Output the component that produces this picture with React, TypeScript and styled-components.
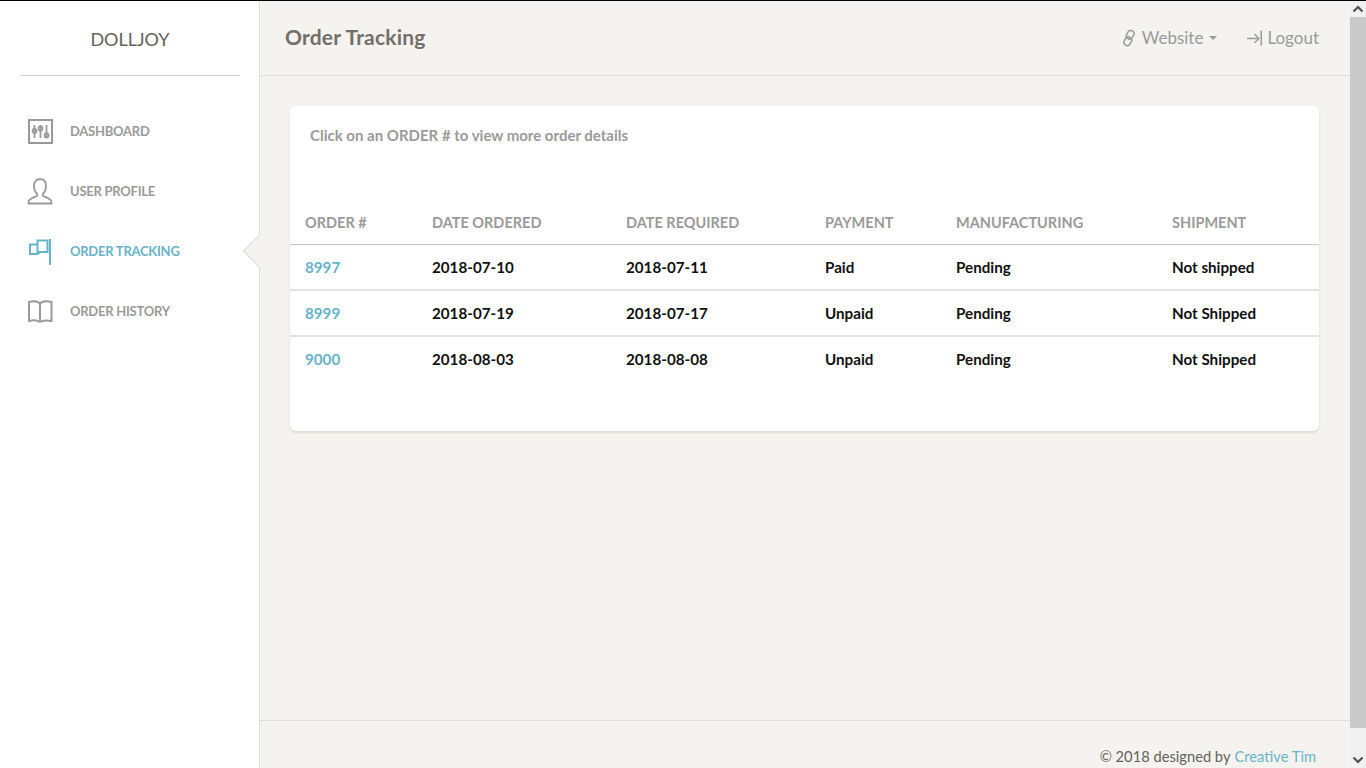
import React from "react";
import styled, { createGlobalStyle, css } from "styled-components";

const GlobalStyle = createGlobalStyle`
  html, body {
    margin: 0;
    padding: 0;
    height: 100%;
    overflow: hidden;
  }
  body {
    font-family: Lato, "Open Sans", sans-serif;
    background: #000;
    color: #66615b;
  }
`;

const Frame = styled.div`
  height: 767px;
  margin-top: 1px;
  display: flex;
  overflow: hidden;
  background: #f4f3ef;
`;

const Layout = styled.div`
  flex: 1;
  min-width: 0;
  display: flex;
  height: 793px;
`;

// the page's scrollbar, it is part of the picture
const ScrollBar = styled.div`
  width: 16px;
  flex: none;
  display: flex;
  flex-direction: column;
  background: #f1f1f1;
`;

const ScrollButton = styled.svg`
  width: 16px;
  height: 16px;
  flex: none;
  fill: none;
  stroke: #505050;
  stroke-width: 2.2;
`;

const ScrollThumb = styled.div`
  height: 711px;
  flex: none;
  background: #c9c9c9;
`;

const ScrollTrack = styled.div`
  flex: 1;
`;

const Sidebar = styled.aside`
  width: 259px;
  flex: none;
  background: #fff;
  border-right: 1px solid #ddd;
`;

const Brand = styled.div`
  margin: 0 19px 0 20px;
  height: 75px;
  box-sizing: border-box;
  padding-top: 1px;
  border-bottom: 1px solid #cfcfcf;
  display: flex;
  align-items: center;
  justify-content: center;
  font-size: 18px;
  color: #66615b;
`;

const NavList = styled.ul`
  list-style: none;
  margin: 25px 0 0;
  padding: 0;
`;

const NavItem = styled.li<{ $active?: boolean }>`
  position: relative;
  height: 60px;
  display: flex;
  align-items: center;
  padding-left: 27px;
  gap: 17px;
  font-size: 13px;
  font-weight: 700;
  letter-spacing: -0.25px;
  text-transform: uppercase;
  color: ${(p) => (p.$active ? "#68b3c8" : "#9a9a9a")};

  ${(p) =>
    p.$active &&
    css`
      &::after {
        content: "";
        position: absolute;
        right: 0;
        top: 50%;
        width: 23px;
        height: 23px;
        background: #f4f3ef;
        border-left: 1px solid #ddd;
        border-bottom: 1px solid #ddd;
        box-sizing: border-box;
        transform: translate(50%, -50%) rotate(45deg);
      }
    `}
`;

const NavIcon = styled.svg`
  width: 26px;
  height: 28px;
  flex: none;
  fill: none;
  stroke: currentColor;
`;

const Main = styled.div`
  flex: 1;
  min-width: 0;
  display: flex;
  flex-direction: column;
  position: relative;
  z-index: 1;
`;

const TopBar = styled.header`
  height: 75px;
  box-sizing: border-box;
  flex: none;
  border-bottom: 1px solid #ddd;
  display: flex;
  align-items: center;
  justify-content: space-between;
  padding: 0 31px 2px 25px;
`;

const PageTitle = styled.h1`
  margin: 0 0 2px;
  font-size: 21px;
  font-weight: 700;
  letter-spacing: 0.2px;
  color: #66615b;
  opacity: 0.9;
`;

const TopLinks = styled.nav`
  display: flex;
  align-items: center;
  gap: 29px;
  margin-top: 1px;
  font-size: 17px;
  color: #9a9a9a;
`;

const TopLink = styled.span<{ $gap: number }>`
  display: flex;
  align-items: center;
  gap: ${(p) => p.$gap}px;
`;

const Caret = styled.i`
  display: inline-block;
  border-top: 4px solid #9a9a9a;
  border-left: 4px solid transparent;
  border-right: 4px solid transparent;
`;

const TopIcon = styled.svg`
  height: 18px;
  fill: none;
  stroke: currentColor;
`;

const Content = styled.main`
  flex: 1;
  padding: 30px 31px 0 30px;
`;

const Card = styled.section`
  height: 325px;
  background: #fff;
  border-radius: 6px;
  box-shadow: 0 2px 2px rgba(204, 197, 185, 0.5);
  box-sizing: border-box;
  padding-top: 20px;
`;

const Hint = styled.p`
  margin: 0 0 0 20px;
  font-size: 15px;
  line-height: 18px;
  font-weight: 700;
  color: #9a9a9a;
`;

const OrdersTable = styled.table`
  width: 100%;
  margin-top: 59px;
  border-collapse: collapse;
  table-layout: fixed;
`;

const HeadCell = styled.th<{ $w: number }>`
  width: ${(p) => p.$w}px;
  height: 41px;
  padding: 0 0 1px 15px;
  box-sizing: border-box;
  text-align: left;
  font-size: 14.5px;
  font-weight: 700;
  color: #9a9a9a;
  text-transform: uppercase;
  border-bottom: 1px solid #ccc5b9;
`;

const Row = styled.tr`
  & + & td {
    border-top: 2px solid #e3e3e3;
  }
`;

const Cell = styled.td`
  height: 44px;
  padding: 0 0 0 15px;
  font-size: 15.2px;
  font-weight: 700;
  color: #111;
`;

const OrderLink = styled.a`
  color: #68b3c8;
  text-decoration: none;
`;

const Footer = styled.footer`
  flex: none;
  height: 74px;
  border-top: 1px solid #ddd;
  display: flex;
  justify-content: flex-end;
  padding: 26px 34px 0 0;
  box-sizing: border-box;
  font-size: 14.7px;
  color: #66615b;
`;

const FooterLink = styled.a`
  color: #68b3c8;
  margin-left: 4px;
`;

const orders = [
  { id: "8997", ordered: "2018-07-10", required: "2018-07-11", payment: "Paid", mfg: "Pending", ship: "Not shipped" },
  { id: "8999", ordered: "2018-07-19", required: "2018-07-17", payment: "Unpaid", mfg: "Pending", ship: "Not Shipped" },
  { id: "9000", ordered: "2018-08-03", required: "2018-08-08", payment: "Unpaid", mfg: "Pending", ship: "Not Shipped" },
];

const columns = [
  { label: "Order #", w: 127 },
  { label: "Date Ordered", w: 194 },
  { label: "Date Required", w: 199 },
  { label: "Payment", w: 131 },
  { label: "Manufacturing", w: 216 },
  { label: "Shipment", w: 162 },
];

function App() {
  return (
    <>
      <GlobalStyle />
      <Frame>
        <Layout>
          <Sidebar>
            <Brand>DOLLJOY</Brand>
            <NavList>
              <NavItem>
                <NavIcon viewBox="0 0 26 28">
                  <rect x="2" y="3" width="23" height="23" strokeWidth="2" />
                  <path d="M7.500 8v13M13.500 8v13M19.500 8v13" strokeWidth="1.800" />
                  <circle cx="7.500" cy="14" r="2" strokeWidth="1.800" />
                  <circle cx="13.500" cy="11.500" r="2" strokeWidth="1.800" />
                  <circle cx="19.500" cy="18.500" r="2" strokeWidth="1.800" />
                </NavIcon>
                Dashboard
              </NavItem>
              <NavItem>
                <NavIcon viewBox="0 0 26 28">
                  <path d="M1.500 26.500v-1.500c0-3.500 6-4.500 8.500-6v-2.500c-2-1.500-3-4-3-7.500C7 4.500 9.500 2 13 2s6 2.500 6 7c0 3.500-1 6-3 7.500V19c2.500 1.500 8.500 2.500 8.500 6v1.500z" strokeWidth="1.800" />
                </NavIcon>
                User Profile
              </NavItem>
              <NavItem $active>
                <NavIcon viewBox="0 0 26 28">
                  <path d="M23 2v26" strokeWidth="2" />
                  <rect x="10.500" y="3.500" width="10" height="11.500" strokeWidth="2" />
                  <path d="M10.500 7.500H3V17h7.500L13 15" strokeWidth="2" />
                </NavIcon>
                Order Tracking
              </NavItem>
              <NavItem>
                <NavIcon viewBox="0 0 26 28">
                  <path
                    d="M2 5c4-1 8.500-1 11 1.500C15.500 4 20 4 24.500 5v19c-4-.8-8-.8-10 .5h-3c-2-1.300-6-1.300-9.500-.5zM13 6.500v18"
                    strokeWidth="2"
                  />
                </NavIcon>
                Order History
              </NavItem>
            </NavList>
          </Sidebar>
          <Main>
            <TopBar>
              <PageTitle>Order Tracking</PageTitle>
              <TopLinks>
                <TopLink $gap={6}>
                  <TopIcon viewBox="0 0 14 18" width="14">
                    <rect x="4.800" y="1.200" width="6.500" height="9" rx="3.200" transform="rotate(28 8 6)" strokeWidth="1.500" />
                    <rect x="2.700" y="7.800" width="6.500" height="9" rx="3.200" transform="rotate(28 6 12)" strokeWidth="1.500" />
                  </TopIcon>
                  Website
                  <Caret />
                </TopLink>
                <TopLink $gap={5}>
                  <TopIcon viewBox="0 0 16 18" width="16">
                    <path d="M1 9.500h12M8.500 5l4.500 4.500L8.500 14" strokeWidth="1.300" />
                    <path d="M15.500 1.500v15" strokeWidth="2" />
                  </TopIcon>
                  Logout
                </TopLink>
              </TopLinks>
            </TopBar>
            <Content>
              <Card>
                <Hint>Click on an ORDER # to view more order details</Hint>
                <OrdersTable>
                  <thead>
                    <tr>
                      {columns.map((c) => (
                        <HeadCell key={c.label} $w={c.w}>{c.label}</HeadCell>
                      ))}
                    </tr>
                  </thead>
                  <tbody>
                    {orders.map((o) => (
                      <Row key={o.id}>
                        <Cell><OrderLink href="#">{o.id}</OrderLink></Cell>
                        <Cell>{o.ordered}</Cell>
                        <Cell>{o.required}</Cell>
                        <Cell>{o.payment}</Cell>
                        <Cell>{o.mfg}</Cell>
                        <Cell>{o.ship}</Cell>
                      </Row>
                    ))}
                  </tbody>
                </OrdersTable>
              </Card>
            </Content>
            <Footer>
              © 2018 designed by <FooterLink>Creative Tim</FooterLink>
            </Footer>
          </Main>
        </Layout>
        <ScrollBar>
          <ScrollButton viewBox="0 0 16 16"><path d="M3.500 10.500 8 6l4.500 4.500" /></ScrollButton>
          <ScrollThumb />
          <ScrollTrack />
          <ScrollButton viewBox="0 0 16 16"><path d="M3.500 5.500 8 10l4.500-4.500" /></ScrollButton>
        </ScrollBar>
      </Frame>
    </>
  );
}

export default App;
